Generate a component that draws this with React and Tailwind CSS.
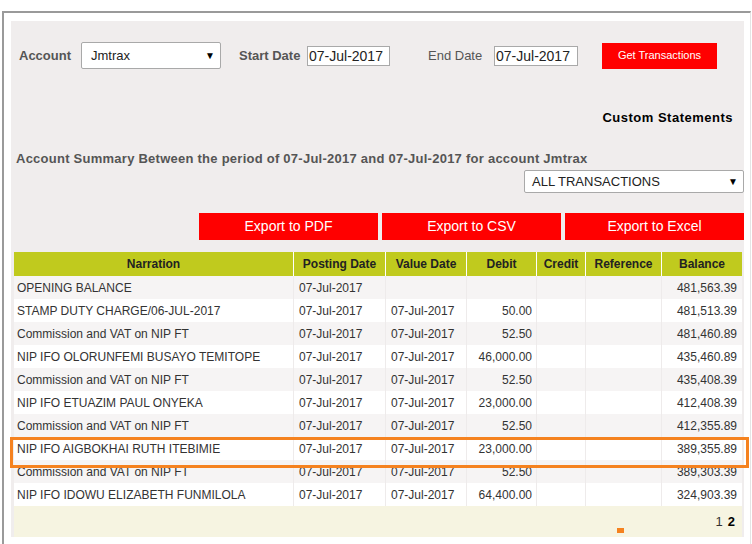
import React from "react";

const rows = [
  ["OPENING BALANCE", "07-Jul-2017", "", "", "481,563.39"],
  ["STAMP DUTY CHARGE/06-JUL-2017", "07-Jul-2017", "07-Jul-2017", "50.00", "481,513.39"],
  ["Commission and VAT on NIP FT", "07-Jul-2017", "07-Jul-2017", "52.50", "481,460.89"],
  ["NIP IFO OLORUNFEMI BUSAYO TEMITOPE", "07-Jul-2017", "07-Jul-2017", "46,000.00", "435,460.89"],
  ["Commission and VAT on NIP FT", "07-Jul-2017", "07-Jul-2017", "52.50", "435,408.39"],
  ["NIP IFO ETUAZIM PAUL ONYEKA", "07-Jul-2017", "07-Jul-2017", "23,000.00", "412,408.39"],
  ["Commission and VAT on NIP FT", "07-Jul-2017", "07-Jul-2017", "52.50", "412,355.89"],
  ["NIP IFO AIGBOKHAI RUTH ITEBIMIE", "07-Jul-2017", "07-Jul-2017", "23,000.00", "389,355.89"],
  ["Commission and VAT on NIP FT", "07-Jul-2017", "07-Jul-2017", "52.50", "389,303.39"],
  ["NIP IFO IDOWU ELIZABETH FUNMILOLA", "07-Jul-2017", "07-Jul-2017", "64,400.00", "324,903.39"],
];

const headers = ["Narration", "Posting Date", "Value Date", "Debit", "Credit", "Reference", "Balance"];

const cols = "grid grid-cols-[280px_92px_81px_70px_49px_76px_80px]";

const SelectBox = ({ value, className }) => (
  <div className={"flex items-center justify-between bg-white border border-[#a9a9a9] rounded-[2px] text-[13px] text-[#222] " + className}>
    <span>{value}</span>
    <span className="text-[10px] text-black">▼</span>
  </div>
);

const DateInput = ({ value, className }) => (
  <div className={"flex items-center h-[20px] bg-white border border-[#a9a9a9] pl-[1px] text-[14px] text-[#222] leading-none " + className}>
    {value}
  </div>
);

export default function App() {
  return (
    <div className="relative w-[752px] h-[544px] overflow-hidden bg-white pt-[11px] pl-[2px] font-['Liberation_Sans',Arial,sans-serif]">
      <div className="w-[749px] h-[533px] border-l-2 border-t-2 border-r border-l-[#9a9a9a] border-t-[#9a9a9a] border-r-[#e4e4e4] pl-[7px] pt-[8px]">
        <div className="w-[733px] h-[516px] bg-[#f0eded] flex flex-col">
          {/* filters */}
          <div className="flex items-center h-[27px] mt-[21px] pl-[8px] text-[13px] text-[#555]">
            <span className="w-[62px] font-bold">Account</span>
            <SelectBox value="Jmtrax" className="w-[140px] h-[27px] pl-[9px] pr-[5px]" />
            <span className="ml-[18px] w-[68px] font-bold whitespace-nowrap">Start Date</span>
            <DateInput value="07-Jul-2017" className="w-[83px]" />
            <span className="ml-[38px] w-[66px] whitespace-nowrap">End Date</span>
            <DateInput value="07-Jul-2017" className="w-[84px]" />
            <button className="ml-[24px] w-[115px] h-[26px] bg-[#ff0000] text-white text-[11px]">
              Get Transactions
            </button>
          </div>

          <div className="mt-[41px] pr-[11px] text-right text-[13px] leading-[16px] font-bold text-black tracking-[0.5px]">
            Custom Statements
          </div>

          <div className="mt-[25px] pl-[5px] text-[13px] leading-[16px] font-bold text-[#555] whitespace-nowrap tracking-[0.25px]">
            Account Summary Between the period of 07-Jul-2017 and 07-Jul-2017 for account Jmtrax
          </div>

          <div className="flex justify-end mt-[3px]">
            <SelectBox value="ALL TRANSACTIONS" className="w-[220px] h-[23px] pl-[7px] pr-[5px]" />
          </div>

          <div className="flex justify-end gap-[4px] mt-[20px]">
            {["Export to PDF", "Export to CSV", "Export to Excel"].map((t) => (
              <button key={t} className="w-[179px] h-[27px] bg-[#ff0000] text-white text-[14px]">
                {t}
              </button>
            ))}
          </div>

          {/* table */}
          <div className="mt-[12px] ml-[3px] w-[728px]">
            <div className={cols + " h-[24px] bg-[#c0ca1e] text-[12px] font-bold text-[#222]"}>
              {headers.map((h, i) => (
                <div
                  key={h}
                  className={"flex items-center justify-center whitespace-nowrap " + (i < headers.length - 1 ? "border-r border-white" : "")}
                >
                  {h}
                </div>
              ))}
            </div>
            {rows.map((r, i) => (
              <div
                key={i}
                className={cols + " h-[23px] text-[12px] text-[#333] " + (i % 2 === 0 ? "bg-[#f6f4f4]" : "bg-white")}
              >
                <div className="flex items-center pl-[3px] whitespace-nowrap border-r border-[#eeebeb]">{r[0]}</div>
                <div className="flex items-center pl-[5px] border-r border-[#eeebeb]">{r[1]}</div>
                <div className="flex items-center pl-[5px] border-r border-[#eeebeb]">{r[2]}</div>
                <div className="flex items-center justify-end pr-[4px] border-r border-[#eeebeb]">{r[3]}</div>
                <div className="border-r border-[#eeebeb]"></div>
                <div className="border-r border-[#eeebeb]"></div>
                <div className="flex items-center justify-end pr-[5px]">{r[4]}</div>
              </div>
            ))}
            <div className="flex items-center justify-end h-[31px] bg-[#f6f4e1] pr-[7px] text-[13px] text-[#333]">
              <span>1</span>
              <span className="ml-[5px] font-bold text-black">2</span>
            </div>
          </div>
        </div>
      </div>

      {/* annotation overlays */}
      <div className="absolute left-[10px] top-[437px] w-[739px] h-[31px] border-[3px] border-[#f5821f]"></div>
      <div className="absolute left-[617px] top-[528px] w-[7px] h-[5px] bg-[#f5821f]"></div>
    </div>
  );
}
